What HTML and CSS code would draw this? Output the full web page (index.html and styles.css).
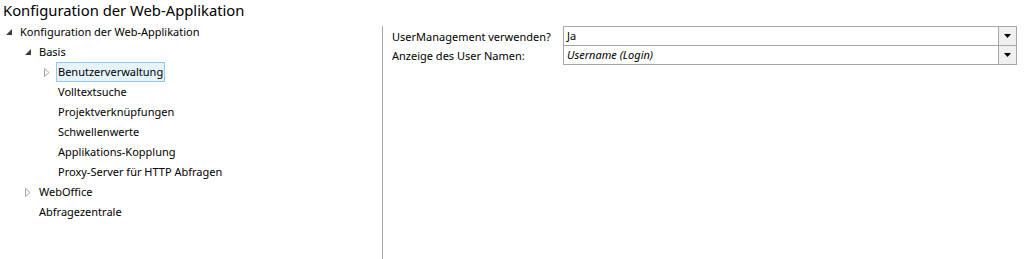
FILE: index.html
```html
<!DOCTYPE html>
<html>
<head>
<meta charset="utf-8">
<link rel="stylesheet" href="styles.css">
</head>
<body>
<div class="title">Konfiguration der Web-Applikation</div>
<div class="main">
  <div class="tree">
    <div class="row l0"><span class="glyph"><svg width="6" height="6" viewBox="0 0 6 6"><polygon points="6,0 6,6 0,6" fill="#3c3c3c"/></svg></span><span class="label">Konfiguration der Web-Applikation</span></div>
    <div class="row l1"><span class="glyph"><svg width="6" height="6" viewBox="0 0 6 6"><polygon points="6,0 6,6 0,6" fill="#3c3c3c"/></svg></span><span class="label">Basis</span></div>
    <div class="row l2"><span class="glyph"><svg width="6" height="9" viewBox="0 0 6 9"><polygon points="0.5,0.5 5,4.5 0.5,8.5" fill="none" stroke="#a6a6a6"/></svg></span><span class="label selected">Benutzerverwaltung</span></div>
    <div class="row l2"><span class="glyph"></span><span class="label">Volltextsuche</span></div>
    <div class="row l2"><span class="glyph"></span><span class="label">Projektverknüpfungen</span></div>
    <div class="row l2"><span class="glyph"></span><span class="label">Schwellenwerte</span></div>
    <div class="row l2"><span class="glyph"></span><span class="label">Applikations-Kopplung</span></div>
    <div class="row l2"><span class="glyph"></span><span class="label">Proxy-Server für HTTP Abfragen</span></div>
    <div class="row l1"><span class="glyph"><svg width="6" height="9" viewBox="0 0 6 9"><polygon points="0.5,0.5 5,4.5 0.5,8.5" fill="none" stroke="#a6a6a6"/></svg></span><span class="label">WebOffice</span></div>
    <div class="row l1"><span class="glyph"></span><span class="label">Abfragezentrale</span></div>
  </div>
  <div class="props">
    <div class="prop">
      <div class="plabel">UserManagement verwenden?</div>
      <div class="combo"><span class="value">Ja</span><span class="btn"><svg width="7" height="4" viewBox="0 0 7 4"><polygon points="0,0 7,0 3.5,4" fill="#000"/></svg></span></div>
    </div>
    <div class="prop second">
      <div class="plabel">Anzeige des User Namen:</div>
      <div class="combo"><span class="value italic">Username (Login)</span><span class="btn"><svg width="7" height="4" viewBox="0 0 7 4"><polygon points="0,0 7,0 3.5,4" fill="#000"/></svg></span></div>
    </div>
  </div>
</div>
</body>
</html>
```
FILE: styles.css
```css
html, body {
  margin: 0;
  padding: 0;
  background: #fff;
}
body {
  font-family: "Noto Sans", "Open Sans", "DejaVu Sans", sans-serif;
  font-size: 11px;
  color: #000;
  width: 1033px;
  height: 259px;
  overflow: hidden;
}
.title {
  font-size: 14.8px;
  height: 22px;
  line-height: 22px;
  padding-left: 3px;
  margin-top: -1px;
}
.main {
  display: flex;
  height: 238px;
}
.tree {
  width: 383px;
  flex: none;
  padding-top: 1px;
}
.row {
  display: flex;
  align-items: center;
  height: 20px;
}
.row.l0 { padding-left: 0; }
.row.l1 { padding-left: 19px; }
.row.l2 { padding-left: 38px; }
.glyph {
  width: 18px;
  height: 20px;
  display: flex;
  align-items: center;
  padding-left: 6px;
  box-sizing: border-box;
}
.glyph svg { display: block; }
.label {
  display: block;
  height: 18px;
  line-height: 18px;
  padding: 0 1px;
  border: 1px solid transparent;
  white-space: nowrap;
}
.label.selected {
  background: #e5f3fb;
  border-color: #8fc8f0;
}
.props {
  flex: 1;
  margin-top: 5px;
  margin-left: -1px;
  border-left: 1px solid #a9a9a9;
  padding-left: 9px;
}
.prop {
  display: flex;
  align-items: center;
  height: 20px;
}
.prop.second {
  margin-top: -1px;
}
.plabel {
  width: 171px;
  flex: none;
  white-space: nowrap;
}
.combo {
  width: 454px;
  height: 20px;
  box-sizing: border-box;
  border: 1px solid #a6a6a6;
  display: flex;
  align-items: stretch;
}
.value {
  flex: 1;
  padding-left: 3px;
  line-height: 18px;
}
.italic { font-style: italic; }
.btn {
  width: 17px;
  background: #f0f0f0;
  border-left: 1px solid #a6a6a6;
  display: flex;
  align-items: center;
  justify-content: center;
}
.btn svg { display: block; }
```
